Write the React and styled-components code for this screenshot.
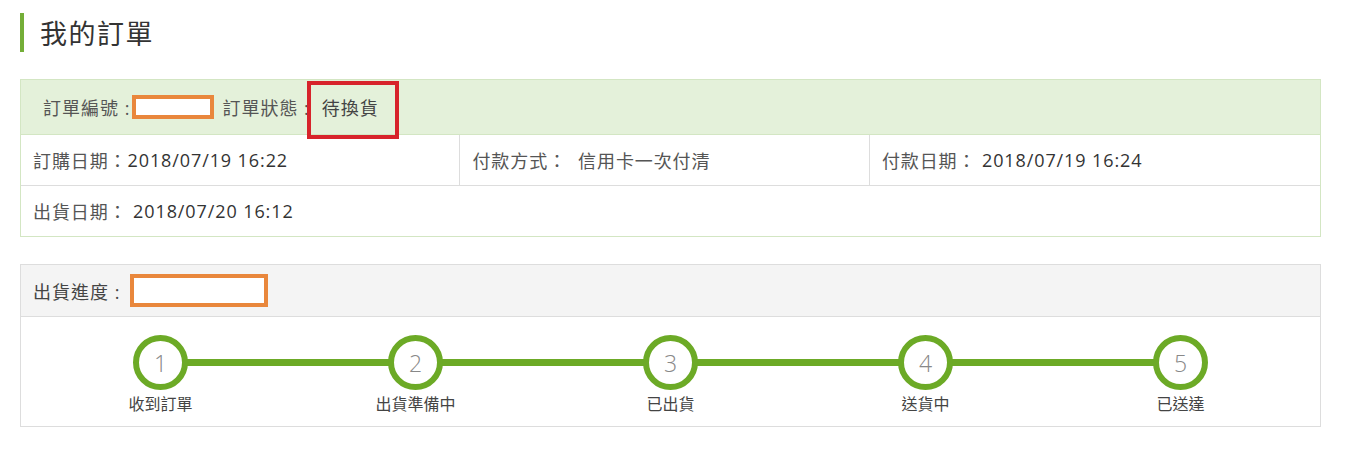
import React from 'react';
import styled, { createGlobalStyle } from 'styled-components';

const GlobalStyle = createGlobalStyle`
  body {
    margin: 0;
    background: #fff;
    font-family: "Open Sans", "Noto Sans CJK TC", sans-serif;
    color: #333;
  }
`;

const steps = ['收到訂單', '出貨準備中', '已出貨', '送貨中', '已送達'];

const App = () => {
  return (
    <Page>
      <GlobalStyle />
      <Title>我的訂單</Title>

      <Panel variant="success">
        <PanelHeading variant="success">
          訂單編號 :<Redacted />
          <HeadLabel>訂單狀態 :</HeadLabel>
          <Status>待換貨</Status>
        </PanelHeading>
        <InfoRow>
          <Cell style={{ flexBasis: 440 }}>
            <Label>訂購日期：</Label>2018/07/19 16:22
          </Cell>
          <Cell style={{ flexBasis: 409 }}>
            <Label>付款方式：  信用卡一次付清</Label>
          </Cell>
          <Cell style={{ flexBasis: 452 }}>
            <Label>付款日期：</Label> 2018/07/19 16:24
          </Cell>
        </InfoRow>
        <InfoRow last>
          <Cell>
            <Label>出貨日期：</Label> 2018/07/20 16:12
          </Cell>
        </InfoRow>
      </Panel>

      <Panel>
        <PanelHeading>
          出貨進度 :<Redacted wide />
        </PanelHeading>
        <Steps>
          {steps.map((s, i) => (
            <Step key={s} first={i === 0}>
              <Circle>{i + 1}</Circle>
              <StepLabel>{s}</StepLabel>
            </Step>
          ))}
        </Steps>
      </Panel>
    </Page>
  );
};

export default App;

const Page = styled.div`
  padding: 13px 26px 10px 20px;
`;

const Title = styled.h1`
  margin: 0 0 27px;
  border-left: 4px solid #74ae38;
  padding-left: 16px;
  height: 39px;
  display: flex;
  align-items: center;
  font-size: 27px;
  font-weight: 400;
  letter-spacing: 1.5px;
  color: #333;
`;

const Panel = styled.div`
  border: 1px solid ${p => (p.variant === 'success' ? '#d3e6c3' : '#dddddd')};
  margin-bottom: 27px;

  &:last-child {
    margin-bottom: 0;
  }
`;

const PanelHeading = styled.div`
  display: flex;
  align-items: center;
  height: ${p => (p.variant === 'success' ? '54px' : '51px')};
  padding-left: ${p => (p.variant === 'success' ? '22px' : '12px')};
  background: ${p => (p.variant === 'success' ? '#e4f1da' : '#f4f4f4')};
  border-bottom: 1px solid ${p => (p.variant === 'success' ? '#d3e6c3' : '#dddddd')};
  font-size: 18px;
  letter-spacing: 1px;
  white-space: pre;
  color: ${p => (p.variant === 'success' ? '#555' : '#444')};
`;

const Redacted = styled.span`
  display: inline-block;
  box-sizing: border-box;
  width: ${p => (p.wide ? '138px' : '82px')};
  height: ${p => (p.wide ? '33px' : '24px')};
  border: 4px solid #e9873c;
  background: #fff;
  margin-left: ${p => (p.wide ? '10px' : '2px')};
`;

const HeadLabel = styled.span`
  margin-left: 8px;
`;

const Status = styled.span`
  position: relative;
  margin-left: 12px;
  color: #444;

  &::after {
    content: '';
    position: absolute;
    left: -15px;
    right: -20px;
    top: -13px;
    bottom: -19px;
    border: 4px solid #d7232b;
  }
`;

const InfoRow = styled.div`
  display: flex;
  height: 50px;
  border-bottom: ${p => (p.last ? 'none' : '1px solid #dddddd')};
  font-size: 18px;
  letter-spacing: 0.9px;
  color: #333;
`;

const Cell = styled.div`
  flex: 1 1 auto;
  display: flex;
  align-items: center;
  padding-left: 12px;
  white-space: pre;

  & + & {
    border-left: 1px solid #dddddd;
  }
`;

const Label = styled.span`
  color: #555;
`;

const Steps = styled.div`
  display: grid;
  grid-template-columns: repeat(5, 1fr);
  padding: 18px 12px 12px;
`;

const Step = styled.div`
  position: relative;
  display: flex;
  flex-direction: column;
  align-items: center;

  &::before {
    content: '';
    display: ${p => (p.first ? 'none' : 'block')};
    position: absolute;
    top: 24px;
    left: -50%;
    right: 50%;
    height: 7px;
    background: #6caa26;
  }
`;

const Circle = styled.div`
  position: relative;
  z-index: 1;
  box-sizing: border-box;
  width: 55px;
  height: 55px;
  border-radius: 50%;
  border: 6px solid #6caa26;
  background: #fff;
  display: flex;
  align-items: center;
  justify-content: center;
  font-size: 23px;
  font-weight: 300;
  color: #888;
`;

const StepLabel = styled.div`
  margin-top: 4px;
  font-size: 16px;
  line-height: 20px;
  color: #444;
`;
